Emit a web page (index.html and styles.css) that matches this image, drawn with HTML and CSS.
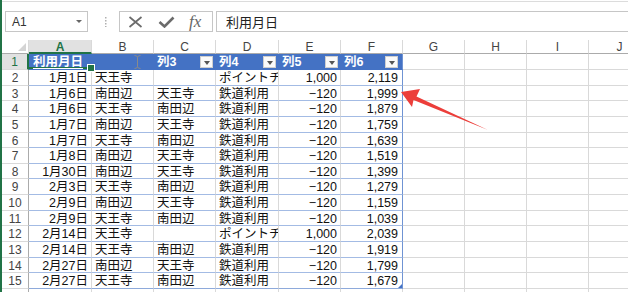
FILE: index.html
```html
<!DOCTYPE html>
<html>
<head>
<title>利用履歴</title>
<link rel="stylesheet" href="styles.css">
</head>
<body>
<div class="app">
  <div class="fbar">
    <div class="namebox"><span>A1</span><i class="caret"></i></div>
    <div class="grip"><svg width="2" height="10"><rect x="0" y="0" width="1.5" height="1.5"/><rect x="0" y="3" width="1.5" height="1.5"/><rect x="0" y="6" width="1.5" height="1.5"/><rect x="0" y="9" width="1.5" height="1.5"/></svg></div>
    <div class="fbtns">
      <svg class="ico" width="15" height="12"><path d="M1.5 1 L13.5 11 M13.5 1 L1.5 11"/></svg>
      <svg class="ico ok" width="17" height="12"><path d="M1.5 6 L6.5 10.5 L15.5 1.5"/></svg>
      <span class="fx">fx</span>
    </div>
    <div class="finput">利用月日</div>
  </div>

  <div class="sheet">
    <div class="row hdr">
      <div class="corner"><i></i></div>
      <div class="on">A</div><div>B</div><div>C</div><div>D</div><div>E</div><div>F</div><div>G</div><div>H</div><div>I</div><div>J</div>
    </div>
    <div class="row r1">
      <div class="rh on">1</div>
      <div class="th sel"><span class="ime">利用月日</span></div>
      <div class="th"><svg class="beam" width="7" height="14"><path d="M0.5 0.5 Q3.5 0.5 3.5 2.5 Q3.5 0.5 6.5 0.5 M3.5 2.5 V11.5 M0.5 13.5 Q3.5 13.5 3.5 11.5 Q3.5 13.5 6.5 13.5"/></svg></div>
      <div class="th"><span>列3</span><i class="dd"></i></div>
      <div class="th"><span>列4</span><i class="dd"></i></div>
      <div class="th"><span>列5</span><i class="dd"></i></div>
      <div class="th te"><span>列6</span><i class="dd"></i></div>
      <div></div><div></div><div></div><div></div>
    </div>
    <div class="row"><div class="rh">2</div><div class="t n">1月1日</div><div class="t">天王寺</div><div class="t"></div><div class="t">ポイントチャージ</div><div class="t n">1,000</div><div class="t n te">2,119</div><div></div><div></div><div></div><div></div></div>
    <div class="row"><div class="rh">3</div><div class="t n">1月6日</div><div class="t">南田辺</div><div class="t">天王寺</div><div class="t">鉄道利用</div><div class="t n">−120</div><div class="t n te">1,999</div><div></div><div></div><div></div><div></div></div>
    <div class="row"><div class="rh">4</div><div class="t n">1月6日</div><div class="t">天王寺</div><div class="t">南田辺</div><div class="t">鉄道利用</div><div class="t n">−120</div><div class="t n te">1,879</div><div></div><div></div><div></div><div></div></div>
    <div class="row"><div class="rh">5</div><div class="t n">1月7日</div><div class="t">南田辺</div><div class="t">天王寺</div><div class="t">鉄道利用</div><div class="t n">−120</div><div class="t n te">1,759</div><div></div><div></div><div></div><div></div></div>
    <div class="row"><div class="rh">6</div><div class="t n">1月7日</div><div class="t">天王寺</div><div class="t">南田辺</div><div class="t">鉄道利用</div><div class="t n">−120</div><div class="t n te">1,639</div><div></div><div></div><div></div><div></div></div>
    <div class="row"><div class="rh">7</div><div class="t n">1月8日</div><div class="t">南田辺</div><div class="t">天王寺</div><div class="t">鉄道利用</div><div class="t n">−120</div><div class="t n te">1,519</div><div></div><div></div><div></div><div></div></div>
    <div class="row"><div class="rh">8</div><div class="t n">1月30日</div><div class="t">南田辺</div><div class="t">天王寺</div><div class="t">鉄道利用</div><div class="t n">−120</div><div class="t n te">1,399</div><div></div><div></div><div></div><div></div></div>
    <div class="row"><div class="rh">9</div><div class="t n">2月3日</div><div class="t">天王寺</div><div class="t">南田辺</div><div class="t">鉄道利用</div><div class="t n">−120</div><div class="t n te">1,279</div><div></div><div></div><div></div><div></div></div>
    <div class="row"><div class="rh">10</div><div class="t n">2月9日</div><div class="t">南田辺</div><div class="t">天王寺</div><div class="t">鉄道利用</div><div class="t n">−120</div><div class="t n te">1,159</div><div></div><div></div><div></div><div></div></div>
    <div class="row"><div class="rh">11</div><div class="t n">2月9日</div><div class="t">天王寺</div><div class="t">南田辺</div><div class="t">鉄道利用</div><div class="t n">−120</div><div class="t n te">1,039</div><div></div><div></div><div></div><div></div></div>
    <div class="row"><div class="rh">12</div><div class="t n">2月14日</div><div class="t">天王寺</div><div class="t"></div><div class="t">ポイントチャージ</div><div class="t n">1,000</div><div class="t n te">2,039</div><div></div><div></div><div></div><div></div></div>
    <div class="row"><div class="rh">13</div><div class="t n">2月14日</div><div class="t">天王寺</div><div class="t">南田辺</div><div class="t">鉄道利用</div><div class="t n">−120</div><div class="t n te">1,919</div><div></div><div></div><div></div><div></div></div>
    <div class="row"><div class="rh">14</div><div class="t n">2月27日</div><div class="t">南田辺</div><div class="t">天王寺</div><div class="t">鉄道利用</div><div class="t n">−120</div><div class="t n te">1,799</div><div></div><div></div><div></div><div></div></div>
    <div class="row last"><div class="rh">15</div><div class="t n">2月27日</div><div class="t">天王寺</div><div class="t">南田辺</div><div class="t">鉄道利用</div><div class="t n">−120</div><div class="t n te grab">1,679</div><div></div><div></div><div></div><div></div></div>
    <div class="row"><div class="rh">16</div><div></div><div></div><div></div><div></div><div></div><div></div><div></div><div></div><div></div><div></div></div>
  </div>
</div>
<svg class="arrow" width="628" height="292"><polygon points="401,92 420,89 416.5,96.5 488,130 413.5,100 412,107"/></svg>
</body>
</html>
```

FILE: styles.css
```css
* {
  box-sizing: border-box;
}

body {
  margin: 0;
  background: #fff;
  font-family: "Liberation Sans", "Noto Sans CJK JP", sans-serif;
  overflow: hidden;
}

.app {
  width: 628px;
  height: 292px;
  padding-top: 1px;
  border-left: 2px solid #217346;
  overflow: hidden;
}

/* formula bar */
.fbar {
  display: flex;
  align-items: flex-start;
  height: 39px;
  padding: 9px 0 0 3px;
  border-top: 1px solid #dcdcdc;
}

.namebox {
  display: flex;
  align-items: center;
  justify-content: space-between;
  width: 83px;
  height: 21px;
  padding: 0 5px 0 6px;
  border: 1px solid #c6c6c6;
  font-size: 12px;
  color: #333;
}

.caret {
  border-top: 3px solid #666;
  border-left: 3px solid transparent;
  border-right: 3px solid transparent;
}

.grip {
  display: flex;
  justify-content: center;
  width: 31px;
  padding: 6px 0 0 5px;
}

.grip rect {
  fill: #b0b0b0;
}

.fbtns {
  display: flex;
  align-items: center;
  width: 94px;
  height: 21px;
  padding-left: 8px;
  border: 1px solid #c6c6c6;
}

.ico path {
  fill: none;
  stroke: #6b6b6b;
  stroke-width: 1.7;
}

.ico.ok {
  margin-left: 15px;
}

.ico.ok path {
  stroke-width: 2.6;
}

.fx {
  margin-left: 14px;
  font-family: "Liberation Serif", serif;
  font-style: italic;
  font-size: 17px;
  line-height: 18px;
  color: #666;
}

.finput {
  flex: 1;
  height: 21px;
  margin-left: 3px;
  padding-left: 9px;
  border: 1px solid #c6c6c6;
  border-right: none;
  font-family: "Noto Sans CJK JP", sans-serif;
  font-size: 13px;
  line-height: 19px;
  color: #222;
}

/* sheet grid */
.row {
  display: grid;
  grid-template-columns: 27px 63px 62px 62px 63px 62px 62px 62px 62px 62px 62px;
  height: 15.64px;
}

.row > div {
  position: relative;
  padding: 1px 3px 0;
  border-right: 1px solid #d9d9d9;
  border-bottom: 1px solid #d9d9d9;
  overflow: hidden;
  white-space: nowrap;
  font-size: 12.5px;
  line-height: 14px;
  color: #111;
}

.hdr {
  height: 14px;
}

.hdr > div {
  text-align: center;
  font-size: 12px;
  line-height: 12px;
  color: #444;
  border-bottom-color: #ababab;
}

.hdr > div.on {
  background: #e1e1e1;
  color: #217346;
  font-weight: bold;
  border-bottom: 2px solid #217346;
}

.corner i {
  position: absolute;
  right: 2px;
  bottom: 2px;
  border-bottom: 8px solid #d4d4d4;
  border-left: 8px solid transparent;
}

.row > .rh {
  padding: 1px 0 0;
  text-align: center;
  font-size: 12px;
  color: #444;
  border-right-color: #ababab;
}

.row > .rh.on {
  background: #e1e1e1;
  color: #217346;
  border-right: 2px solid #217346;
}

.r1 {
  height: 16px;
}

/* table */
.row > .th {
  display: flex;
  align-items: center;
  justify-content: space-between;
  padding: 0 2px 0 3px;
  background: #4472c4;
  border-color: #4472c4;
  color: #fff;
  font-weight: bold;
}

.row > .sel {
  overflow: visible;
  z-index: 2;
  padding-left: 4px;
  box-shadow: inset 0 -2px #217346;
}

.sel::after {
  content: "";
  position: absolute;
  right: -4px;
  bottom: -3px;
  width: 6px;
  height: 6px;
  background: #217346;
  border: 1px solid #fff;
}

.ime {
  text-decoration: underline;
  text-underline-offset: 2px;
}

.beam {
  margin-left: 39px;
}

.beam path {
  fill: none;
  stroke: #8a8a8a;
}

.dd {
  position: relative;
  width: 13px;
  height: 12px;
  background: #fafafa;
  border: 1px solid #cfcfcf;
}

.dd::after {
  content: "";
  position: absolute;
  left: 3px;
  top: 4px;
  border-top: 4px solid #555;
  border-left: 3px solid transparent;
  border-right: 3px solid transparent;
}

.row > .t {
  border-bottom-color: #a3bbe4;
}

.row > .n {
  text-align: right;
}

.row > .te {
  padding-right: 4px;
  border-right-color: #6f93d3;
}

.row > .th.te {
  border-right-color: #6f93d3;
}

.row.last > .t {
  border-bottom-color: #8eaadb;
}

.grab::after {
  content: "";
  position: absolute;
  right: 0;
  bottom: 0;
  border-bottom: 4px solid #4472c4;
  border-left: 4px solid transparent;
}

.arrow {
  position: absolute;
  top: 0;
  left: 0;
  pointer-events: none;
}

.arrow polygon {
  fill: #ec3e3a;
}
```
